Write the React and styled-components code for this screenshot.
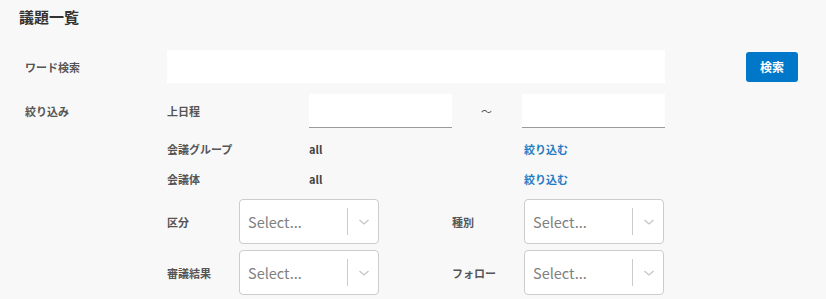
import React from "react";
import styled, { createGlobalStyle } from "styled-components";

const Global = createGlobalStyle`
  html, body { margin: 0; padding: 0; background: #f8f8f8; }
  body { font-family: "Noto Sans CJK JP", "Noto Sans", sans-serif; color: #444; }
  * { box-sizing: border-box; }
`;

const Page = styled.div`
  width: 826px;
  height: 299px;
  background: #f8f8f8;
  overflow: hidden;
`;

const Title = styled.h1`
  margin: 0;
  padding: 8px 19px 0;
  font-size: 15px;
  line-height: 18px;
  font-weight: 700;
  color: #333;
`;

const Form = styled.div`
  padding-left: 25px;
  margin-top: 24px;
`;

const WordRow = styled.div`
  display: grid;
  grid-template-columns: 142px 498px 81px 52px;
  align-items: center;
  height: 33px;
`;

const Label = styled.span`
  font-size: 11px;
  font-weight: 700;
  color: #555;
  line-height: 14px;
`;

const TextBox = styled.div`
  height: 33px;
  background: #fff;
`;

const Button = styled.button`
  height: 30px;
  width: 52px;
  border: none;
  border-radius: 3px;
  background: #0077c8;
  color: #fff;
  font-family: inherit;
  font-size: 12px;
  font-weight: 700;
  padding: 0;
  cursor: pointer;
`;

const FilterRow = styled.div`
  display: grid;
  grid-template-columns: 142px 1fr;
  margin-top: 11px;
`;

const FilterLabel = styled(Label)`
  line-height: 34px;
`;

const FilterBody = styled.div`
  display: flex;
  flex-direction: column;
`;

const DateRow = styled.div`
  display: grid;
  grid-template-columns: 142px 143px 70px 143px;
  align-items: center;
  height: 34px;
`;

const DateBox = styled.div`
  height: 34px;
  background: #fff;
  border-bottom: 1px solid #9a9a9a;
`;

const Tilde = styled.span`
  text-align: center;
  font-size: 11px;
  color: #555;
  padding-right: 1px;
`;

const InfoRow = styled.div`
  display: grid;
  grid-template-columns: 142px 215px auto;
  align-items: center;
  height: 30px;
  margin-top: ${(p) => p.$mt}px;
`;

const Value = styled.span`
  font-size: 11px;
  font-weight: 700;
  color: #444;
`;

const Link = styled.a`
  font-size: 11px;
  font-weight: 700;
  color: #1f7bc4;
  text-decoration: none;
  cursor: pointer;
`;

const SelectRow = styled.div`
  display: grid;
  grid-template-columns: 72px 140px 73px 72px 140px;
  align-items: center;
  height: 45px;
  margin-top: ${(p) => p.$mt}px;
`;

const SelectBox = styled.div`
  height: 45px;
  background: #fff;
  border: 1px solid #cccccc;
  border-radius: 4px;
  display: flex;
  align-items: center;
`;

const Placeholder = styled.span`
  flex: 1;
  padding-left: 8px;
  font-size: 14.5px;
  color: #808080;
`;

const Divider = styled.span`
  width: 1px;
  align-self: stretch;
  margin: 8px 0;
  background: #cccccc;
`;

const Indicator = styled.span`
  width: 30px;
  display: flex;
  align-items: center;
  justify-content: center;
  padding-left: 2px;
`;

const Chevron = () => (
  <svg width="12" height="8" viewBox="0 0 12 8">
    <path d="M1.5 2 L6 6 L10.5 2" fill="none" stroke="#c4c4c4" strokeWidth="1.2" />
  </svg>
);

const Select = () => (
  <SelectBox>
    <Placeholder>Select...</Placeholder>
    <Divider />
    <Indicator>
      <Chevron />
    </Indicator>
  </SelectBox>
);

export default function App() {
  return (
    <Page>
      <Global />
      <Title>議題一覧</Title>
      <Form>
        <WordRow>
          <Label>ワード検索</Label>
          <TextBox />
          <span />
          <Button>検索</Button>
        </WordRow>
        <FilterRow>
          <div>
            <FilterLabel>絞り込み</FilterLabel>
          </div>
          <FilterBody>
            <DateRow>
              <Label>上日程</Label>
              <DateBox />
              <Tilde>〜</Tilde>
              <DateBox />
            </DateRow>
            <InfoRow $mt={6}>
              <Label>会議グループ</Label>
              <Value>all</Value>
              <Link>絞り込む</Link>
            </InfoRow>
            <InfoRow $mt={0}>
              <Label>会議体</Label>
              <Value>all</Value>
              <Link>絞り込む</Link>
            </InfoRow>
            <SelectRow $mt={5}>
              <Label>区分</Label>
              <Select />
              <span />
              <Label>種別</Label>
              <Select />
            </SelectRow>
            <SelectRow $mt={6}>
              <Label>審議結果</Label>
              <Select />
              <span />
              <Label>フォロー</Label>
              <Select />
            </SelectRow>
          </FilterBody>
        </FilterRow>
      </Form>
    </Page>
  );
}
